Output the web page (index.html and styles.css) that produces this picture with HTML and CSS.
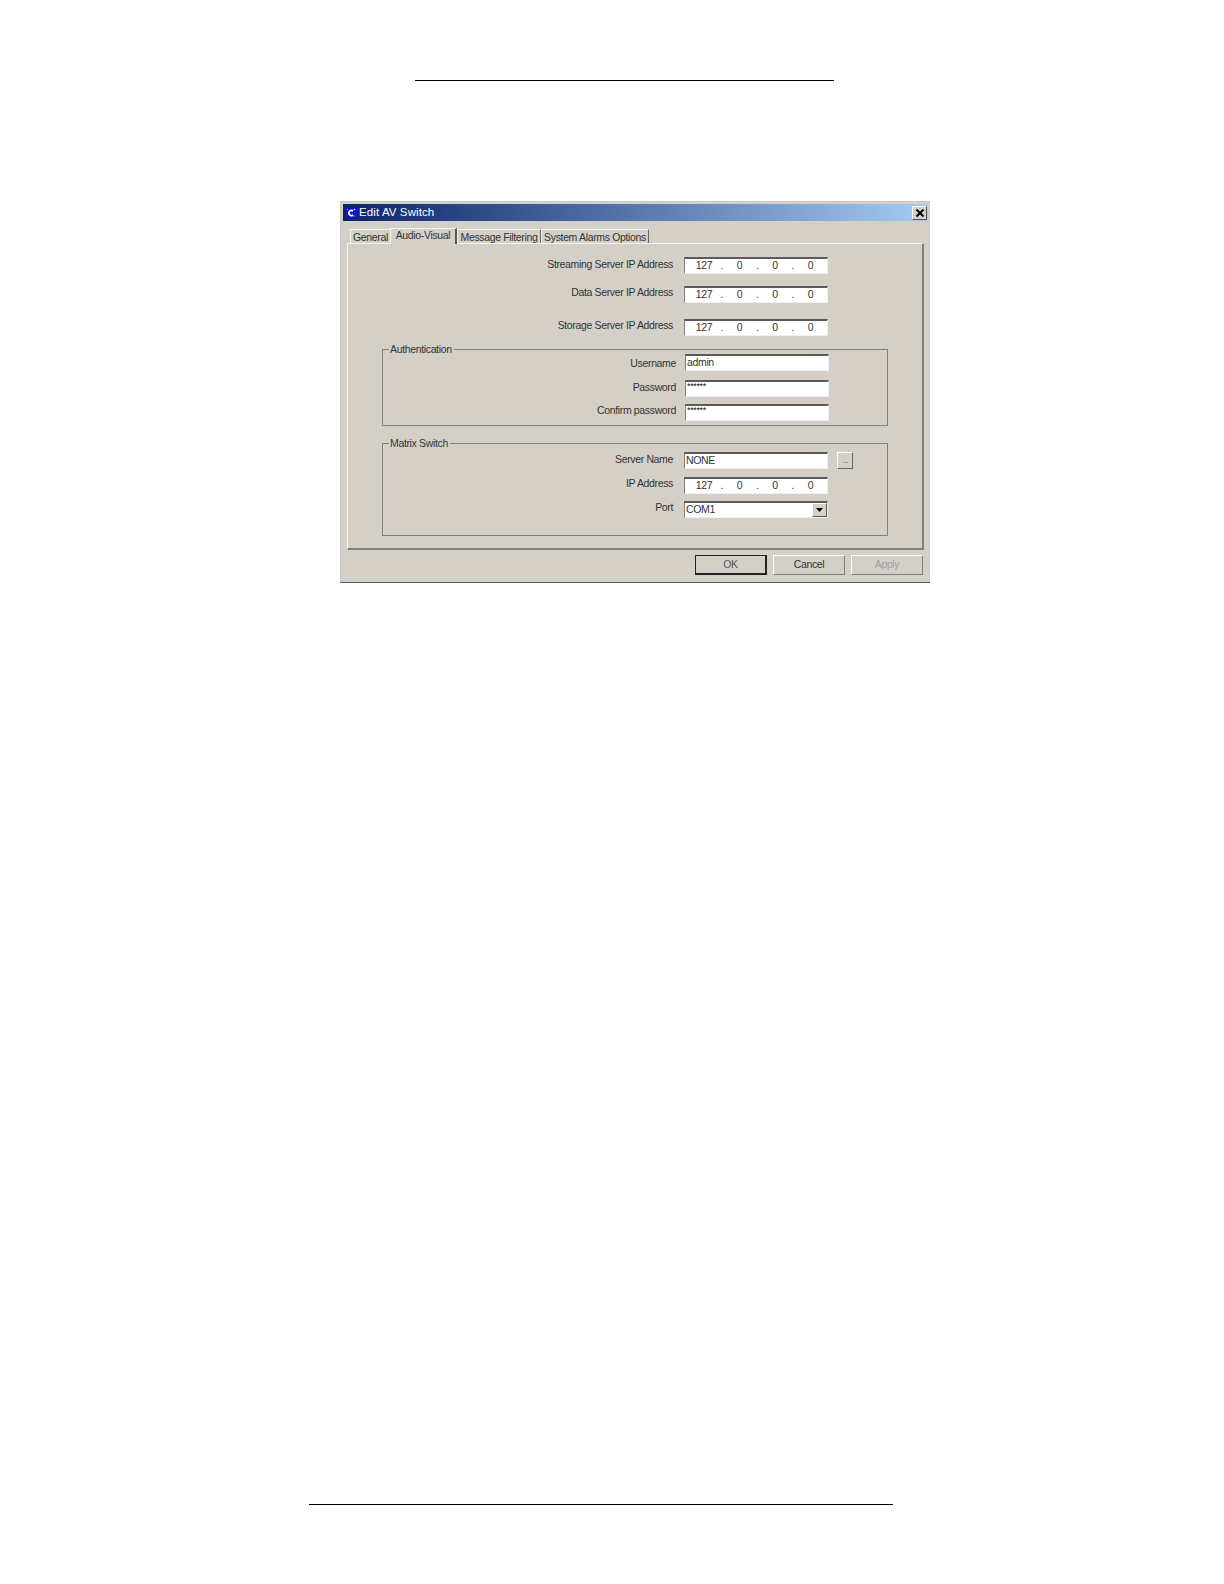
FILE: index.html
```html
<!DOCTYPE html>
<html lang="en">
<head>
    <meta charset="UTF-8">
    <title>Edit AV Switch</title>
    <link rel="stylesheet" href="styles.css">
</head>
<body>
    <div class="rule rule-top"></div>

    <div class="dialog">
        <div class="titlebar">
            <svg class="app-icon" width="10" height="10" viewBox="0 0 12 10">
                <path d="M8.5 2.6 A3.1 3.1 0 1 0 8.5 7.4" fill="none" stroke="#fff" stroke-width="2"/>
                <rect x="1" y="0" width="1.5" height="1.5" fill="#7f9cff"/>
                <rect x="9.5" y="0" width="1.5" height="1.5" fill="#fff"/>
                <rect x="9.5" y="8" width="1.5" height="1.5" fill="#7f9cff"/>
            </svg>
            <span class="title-text">Edit AV Switch</span>
            <div class="close-btn">
                <svg width="10" height="8" viewBox="0 0 10 8">
                    <path d="M1.5 0.5 L8.5 7.5 M8.5 0.5 L1.5 7.5" stroke="#000" stroke-width="2" fill="none"/>
                </svg>
            </div>
        </div>

        <div class="tabs">
            <div class="tab tab-general">General</div>
            <div class="tab tab-active">Audio-Visual</div>
            <div class="tab tab-message">Message Filtering</div>
            <div class="tab tab-system">System Alarms Options</div>
        </div>

        <div class="panel">
            <!-- Server addresses -->
            <div class="row row-first">
                <label class="nudge-1">Streaming Server IP Address</label>
                <div class="field ip"><span>127</span><i>.</i><span>0</span><i>.</i><span>0</span><i>.</i><span>0</span></div>
            </div>
            <div class="row row-data">
                <label>Data Server IP Address</label>
                <div class="field ip"><span>127</span><i>.</i><span>0</span><i>.</i><span>0</span><i>.</i><span>0</span></div>
            </div>
            <div class="row row-storage">
                <label>Storage Server IP Address</label>
                <div class="field ip"><span>127</span><i>.</i><span>0</span><i>.</i><span>0</span><i>.</i><span>0</span></div>
            </div>

            <div class="group group-auth">
                <div class="legend">Authentication</div>
                <div class="row"><label class="nudge-3">Username</label><div class="field text">admin</div></div>
                <div class="row row-pass"><label class="nudge-1">Password</label><div class="field text secret">******</div></div>
                <div class="row row-confirm"><label>Confirm password</label><div class="field text secret">******</div></div>
            </div>

            <div class="group group-matrix">
                <div class="legend">Matrix Switch</div>
                <div class="row">
                    <label class="nudge-1">Server Name</label>
                    <div class="field text">NONE</div>
                    <div class="browse-btn">...</div>
                </div>
                <div class="row row-ip">
                    <label>IP Address</label>
                    <div class="field ip"><span>127</span><i>.</i><span>0</span><i>.</i><span>0</span><i>.</i><span>0</span></div>
                </div>
                <div class="row row-port">
                    <label>Port</label>
                    <div class="field combo">
                        COM1
                        <div class="combo-btn">
                            <svg width="7" height="4" viewBox="0 0 7 4"><path d="M0 0 H7 L3.5 4 Z" fill="#000"/></svg>
                        </div>
                    </div>
                </div>
            </div>
        </div>

        <div class="buttons">
            <div class="btn btn-default">OK</div>
            <div class="btn">Cancel</div>
            <div class="btn btn-disabled">Apply</div>
        </div>
    </div>

    <div class="rule rule-bottom"></div>
</body>
</html>
```

FILE: styles.css
```css
body {
    margin: 0;
    background-color: #ffffff;
    font-family: "Liberation Sans", Arial, sans-serif;
    font-size: 10.5px;
    letter-spacing: -0.35px;
    color: #333;
}

.rule {
    height: 1px;
    background-color: #000;
}

.rule-top {
    width: 419px;
    margin: 80px 0 0 415px;
}

.rule-bottom {
    width: 584px;
    margin: 921px 0 0 309px;
}

.dialog {
    box-sizing: border-box;
    width: 590px;
    height: 382px;
    margin: 120px 0 0 340px;
    padding: 2px 2px 0;
    background-color: #d4d0c8;
    border-top: 1px solid #c8c8c8;
    border-left: 1px solid #c4c4c4;
    border-bottom: 1px solid #555;
}

.titlebar {
    display: flex;
    align-items: center;
    height: 17px;
    padding-left: 2px;
    background: linear-gradient(to right, #0a246a, #a6caf0);
    color: #fff;
}

.app-icon {
    flex: none;
    width: 10px;
    height: 10px;
    padding: 0 1px;
    background-color: #1016c8;
}

.title-text {
    margin: 0 0 2px 2px;
    font-size: 11.5px;
    letter-spacing: 0.1px;
}

.close-btn {
    display: flex;
    align-items: center;
    justify-content: center;
    box-sizing: border-box;
    width: 15px;
    height: 14px;
    margin-left: auto;
    margin-right: 1px;
    background-color: #d4d0c8;
    border: 1px solid;
    border-color: #fff #555 #555 #fff;
}

/* Tabs */
.tabs {
    display: flex;
    align-items: flex-end;
    height: 22px;
    padding-left: 7px;
    white-space: nowrap;
}

.tab {
    box-sizing: border-box;
    height: 14px;
    line-height: 14px;
    text-align: center;
    border-top: 1px solid #f4f4f4;
    border-left: 1px solid #f4f4f4;
    border-right: 1px solid #666;
}

.tab-general {
    width: 40px;
    border-right: 0;
}

.tab-active {
    width: 67px;
    height: 16px;
    line-height: 13px;
    border-right: 2px solid #555;
    position: relative;
    top: 1px;
    z-index: 1;
    background-color: #d4d0c8;
}

.tab-message {
    width: 84px;
}

.tab-system {
    width: 108px;
}

.panel {
    box-sizing: border-box;
    width: 577px;
    height: 307px;
    margin-left: 4px;
    padding-top: 13px;
    border-top: 1px solid #f4f4f4;
    border-left: 1px solid #f4f4f4;
    border-right: 2px solid #808080;
    border-bottom: 2px solid #808080;
}

/* Form rows */
.row {
    display: flex;
    align-items: flex-start;
    gap: 11px;
    height: 17px;
}

.row label {
    flex: none;
    width: 325px;
    line-height: 12px;
    text-align: right;
}

.row label.nudge-1 {
    margin-top: 1px;
}

.row label.nudge-3 {
    margin-top: 3px;
}

.row-data {
    margin-top: 12px;
}

.row-storage {
    margin-top: 16px;
}

.field {
    box-sizing: border-box;
    width: 144px;
    height: 17px;
    background-color: #fff;
    border-top: 2px solid #5a5a5a;
    border-left: 1px solid #808080;
    border-right: 1px solid #f0f0f0;
    border-bottom: 1px solid #f0f0f0;
    line-height: 13px;
}

.ip {
    display: flex;
    padding-left: 7px;
}

.ip span {
    width: 24px;
    text-align: center;
}

.ip i {
    width: 11.5px;
    text-align: center;
    font-style: normal;
}

.text, .combo {
    padding-left: 1px;
}

.secret {
    font-size: 9px;
    line-height: 9px;
    color: #111;
}

/* Group boxes */
.group {
    position: relative;
    box-sizing: border-box;
    width: 506px;
    margin-left: 34px;
    border: 1px solid #808080;
}

.group-auth {
    height: 77px;
    margin-top: 13px;
    padding-top: 4px;
}

.group-auth .row {
    gap: 9px;
}

.group-auth label {
    width: 293px;
}

.row-pass {
    margin-top: 9px;
}

.row-confirm {
    margin-top: 7px;
}

.group-matrix {
    height: 93px;
    margin-top: 17px;
    padding-top: 8px;
}

.group-matrix label {
    width: 290px;
}

.row-ip {
    margin-top: 8px;
}

.row-port {
    margin-top: 7px;
}

.legend {
    position: absolute;
    top: -7px;
    left: 6px;
    padding: 0 2px 0 1px;
    background-color: #d4d0c8;
    line-height: 12px;
}

.browse-btn {
    box-sizing: border-box;
    width: 16px;
    height: 17px;
    margin-left: -2px;
    text-align: center;
    line-height: 14px;
    font-size: 9px;
    color: #777;
    border: 1px solid;
    border-color: #fff #666 #666 #fff;
}

.combo {
    position: relative;
}

.combo-btn {
    position: absolute;
    top: 0;
    right: 0;
    display: flex;
    align-items: center;
    justify-content: center;
    box-sizing: border-box;
    width: 15px;
    height: 14px;
    background-color: #d4d0c8;
    border: 1px solid;
    border-color: #fff #555 #555 #fff;
}

/* Bottom buttons */
.buttons {
    display: flex;
    justify-content: flex-end;
    gap: 6px;
    margin-top: 5px;
    padding-right: 5px;
}

.btn {
    box-sizing: border-box;
    width: 72px;
    height: 20px;
    line-height: 17px;
    text-align: center;
    border: 1px solid;
    border-color: #fff #808080 #808080 #fff;
}

.btn-default {
    border: 1px solid #222;
    border-right-width: 2px;
    border-bottom-width: 2px;
    color: #555;
}

.btn-disabled {
    color: #a0a0a0;
}
```
